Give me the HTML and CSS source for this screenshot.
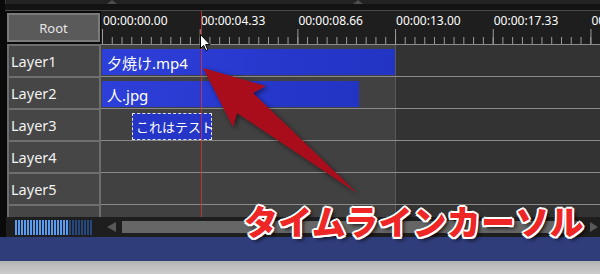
FILE: index.html
```html
<!DOCTYPE html>
<html lang="ja">
<head>
<meta charset="utf-8">
<title>Timeline</title>
<link rel="stylesheet" href="styles.css">
</head>
<body>
<div class="app">
  <div class="topstrip"><span class="grip grip-a"></span><span class="grip grip-b"></span></div>
  <div class="topgap"></div>
  <div class="timeline">
    <div class="head-col">
      <div class="root-slot"><div class="root-btn">Root</div></div>
      <div class="layer-head">Layer1</div>
      <div class="layer-head">Layer2</div>
      <div class="layer-head">Layer3</div>
      <div class="layer-head">Layer4</div>
      <div class="layer-head">Layer5</div>
      <div class="layer-head">Layer6</div>
    </div>
    <div class="track-col">
      <div class="ruler">
        <div class="labels">
          <span class="tl">00:00:00.00</span>
          <span class="tl">00:00:04.33</span>
          <span class="tl">00:00:08.66</span>
          <span class="tl">00:00:13.00</span>
          <span class="tl">00:00:17.33</span>
          <span class="tl">00:00:21.66</span>
        </div>
      </div>
      <div class="track"><div class="clip clip-video">夕焼け.mp4</div></div>
      <div class="track"><div class="clip clip-image">人.jpg</div></div>
      <div class="track"><div class="clip clip-text">これはテスト</div></div>
      <div class="track"></div>
      <div class="track"></div>
      <div class="track"></div>
    </div>
  </div>
  <div class="bottombar">
    <div class="zoom"><span class="zoom-on"></span><span class="zoom-off"></span></div>
    <span class="sb-left"></span>
    <span class="sb-thumb"></span>
    <span class="sb-right"></span>
  </div>
  <div class="taskband"></div>
  <div class="greyband"></div>

  <div class="cursor-line"></div>
  <svg class="arrow" width="600" height="274" viewBox="0 0 600 274">
    <defs>
      <filter id="sh" x="-20%" y="-20%" width="140%" height="140%">
        <feDropShadow dx="2" dy="2" stdDeviation="2.5" flood-color="#000" flood-opacity="0.55"/>
      </filter>
    </defs>
    <polygon points="203,68 266,86 253,93 357,193 237,113 233,127" fill="#a90b1f" filter="url(#sh)"/>
  </svg>
  <svg class="pointer" width="12" height="18" viewBox="0 0 12 18">
    <path d="M0.5 0.5 V14.5 L3.6 11.4 L5.9 16.6 L7.8 15.8 L5.6 10.6 H10 Z" fill="#fff" stroke="#000" stroke-width="1" stroke-linejoin="miter"/>
  </svg>
  <div class="caption">タイムラインカーソル</div>
</div>
</body>
</html>
```
FILE: styles.css
```css
* { box-sizing: border-box; margin: 0; padding: 0; }
html, body { width: 600px; height: 274px; overflow: hidden; background: #0a0a0a; }
body { font-family: "Noto Sans", "Noto Sans CJK JP", sans-serif; }

.app { position: relative; width: 600px; height: 274px; background: #0a0a0a; overflow: hidden; }

.topstrip { height: 4px; margin-left: 5px; background: #232323; border-left: 1px solid #3a3a3a; display: flex; align-items: flex-end; }
.grip { width: 0; height: 0; border-left: 5px solid transparent; border-right: 5px solid transparent; border-bottom: 4px solid #4d4d4d; }
.grip-a { margin-left: 101px; }
.grip-b { margin-left: 236px; }
.topgap { height: 7px; margin-left: 5px; background: #131313; border-bottom: 1px solid #4a4a4a; }

.timeline { display: flex; height: 206px; overflow: hidden; padding-left: 7px; }

.head-col { width: 94px; flex: none; display: flex; flex-direction: column; }
.root-slot { height: 33px; padding-top: 2px; flex: none; }
.root-btn { width: 93px; height: 29px; background: #5a5a5a; border: 2px solid #7b7b7b; color: #e6e6e6; font-size: 13px; display: flex; align-items: center; justify-content: center; }
.layer-head { height: 34px; flex: none; margin-bottom: -2px; border: 2px solid #6e6e6e; background: #464646; color: #f2f2f2; font-size: 14.5px; display: flex; align-items: center; padding-left: 2px; }

.track-col { width: 499px; flex: none; display: flex; flex-direction: column; background: linear-gradient(to right, #414141 294px, #5a5a5a 294px 295px, #333333 295px); }

.ruler {
  height: 34px; flex: none; overflow: hidden;
  border-bottom: 1px solid #8c8c8c;
  background-color: #1e1e1e;
  background-image:
    linear-gradient(to right, #9c9c9c 0 1px, transparent 1px),
    linear-gradient(to right, #9c9c9c 0 1px, transparent 1px);
  background-size: 97.7px 15px, 9.77px 7px;
  background-position: 1px 100%, 1px 100%;
  background-repeat: repeat-x, repeat-x;
}
.labels { display: flex; padding-left: 2px; padding-top: 2px; white-space: nowrap; }
.tl { width: 97.7px; flex: none; font-size: 12px; line-height: 16px; color: #ffffff; }

.track { height: 32px; flex: none; border-bottom: 1px solid #8a8a8a; padding-top: 4px; padding-left: 1px; display: flex; align-items: flex-start; }
.clip { height: 26px; background: linear-gradient(to right, #2d3fd9, #2234c3); color: #ffffff; font-size: 15px; display: flex; align-items: center; padding-left: 5px; white-space: nowrap; }
.clip-video { width: 293px; }
.clip-image { width: 257px; }
.clip-text { width: 80px; height: 27px; margin-left: 30px; border: 1px dashed #e4e4e4; background: #2435c8; font-size: 13px; padding-left: 3px; }

.bottombar { height: 20px; margin-left: 6px; background: #1e1e1e; display: flex; align-items: center; }
.zoom { display: flex; height: 15px; margin-left: 9px; }
.zoom-on { width: 54px; background: repeating-linear-gradient(to right, #5a9bf2 0 2px, transparent 2px 3px); }
.zoom-off { width: 24px; background: repeating-linear-gradient(to right, #27477f 0 2px, transparent 2px 3px); }
.sb-left { width: 0; height: 0; margin-left: 14px; border-top: 5.5px solid transparent; border-bottom: 5.5px solid transparent; border-right: 9px solid #585858; }
.sb-thumb { width: 456px; height: 12px; margin-left: 6px; background: #666666; }
.sb-right { width: 0; height: 0; margin-left: 12px; border-top: 5px solid transparent; border-bottom: 5px solid transparent; border-left: 8px solid #585858; }

.taskband { height: 24px; background: #2f3d7b; }
.greyband { height: 13px; background: linear-gradient(#b4b4b4, #cbcbcb); }

.cursor-line { position: absolute; left: 201px; top: 11px; width: 1px; height: 206px; background: rgba(220, 50, 50, 0.8); }
.arrow { position: absolute; left: 0; top: 0; pointer-events: none; }
.pointer { position: absolute; left: 200px; top: 34px; }
.caption {
  position: absolute; left: 244px; top: 204px;
  font-family: "Noto Sans CJK JP", sans-serif; font-weight: 900; font-size: 34px; line-height: 34px; letter-spacing: 0.2px;
  color: #ef2626; white-space: nowrap;
  text-shadow:
    2px 0 0 #fff, -2px 0 0 #fff, 0 2px 0 #fff, 0 -2px 0 #fff,
    1.5px 1.5px 0 #fff, -1.5px -1.5px 0 #fff, 1.5px -1.5px 0 #fff, -1.5px 1.5px 0 #fff,
    3px 3px 4px rgba(0, 0, 0, 0.85);
}
```
